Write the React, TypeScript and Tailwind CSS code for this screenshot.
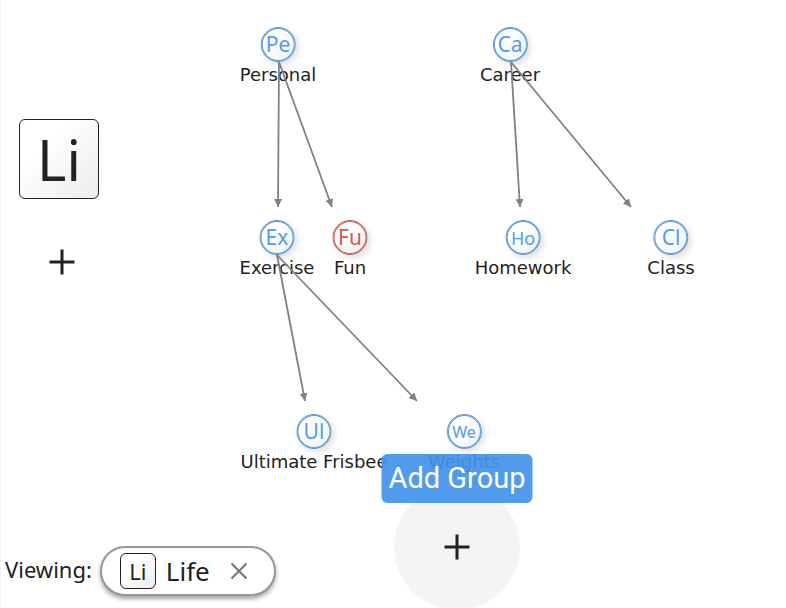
import React from "react";

type GoalNode = {
  name: string;
  initials: string;
  x: number;
  y: number;
  tone: string;
  text: string;
};

const blue = "border-[#5f8fc4] text-[#529bee]";
const red = "border-[#b0655e] text-[#dc5548]";

const nodes: GoalNode[] = [
  { name: "Personal", initials: "Pe", x: 150, y: 27, tone: blue, text: "text-[21px]" },
  { name: "Career", initials: "Ca", x: 382, y: 27, tone: blue, text: "text-[21px]" },
  { name: "Exercise", initials: "Ex", x: 149, y: 220, tone: blue, text: "text-[21px]" },
  { name: "Fun", initials: "Fu", x: 222, y: 220, tone: red, text: "text-[21px]" },
  { name: "Homework", initials: "Ho", x: 395, y: 220, tone: blue, text: "text-lg" },
  { name: "Class", initials: "Cl", x: 543, y: 220, tone: blue, text: "text-[21px]" },
  { name: "Ultimate Frisbee", initials: "Ul", x: 186, y: 414, tone: blue, text: "text-[21px]" },
  { name: "Weights", initials: "We", x: 336, y: 414, tone: blue, text: "text-base" },
];

const edges = [
  [151, 62, 150, 207],
  [151, 62, 204, 207],
  [383, 62, 392, 207],
  [383, 62, 503, 207],
  [149, 255, 177, 401],
  [149, 255, 289, 401],
];

function Plus() {
  return (
    <svg className="size-[26px]" viewBox="0 0 26 26" aria-hidden="true">
      <path d="M13 0.5v25M0.5 13h25" stroke="#222" strokeWidth="3" />
    </svg>
  );
}

function Edges() {
  return (
    <svg className="pointer-events-none absolute inset-0 h-full w-full overflow-visible" aria-hidden="true">
      <defs>
        <marker id="arrow" markerUnits="userSpaceOnUse" markerWidth="9" markerHeight="8" refX="8" refY="4" orient="auto">
          <path d="M0 0L8 4L0 8Z" fill="#808086" />
        </marker>
      </defs>
      {edges.map(([x1, y1, x2, y2]) => (
        <line key={`${x1}-${x2}`} x1={x1} y1={y1} x2={x2} y2={y2} stroke="#808086" strokeWidth="1.8" markerEnd="url(#arrow)" />
      ))}
    </svg>
  );
}

export default function App() {
  return (
    <div className="flex min-h-screen flex-col overflow-hidden border-l border-[#f3f3f3] bg-white [font-family:'Noto_Sans',sans-serif] text-[#222]">
      <main className="flex flex-1">
        <aside className="flex w-[127px] shrink-0 flex-col items-start gap-[50px] pt-[119px] pl-[18px]">
          <button
            type="button"
            className="flex size-20 items-center justify-center rounded-md border border-[#222] bg-linear-to-br from-white from-30% to-[#ececec] text-[56px] leading-none"
          >
            Li
          </button>
          <button type="button" aria-label="Add category" className="ml-[30px]">
            <Plus />
          </button>
        </aside>
        <section aria-label="Groups" className="relative flex-1">
          {nodes.map((node) => (
            <div
              key={node.name}
              className="absolute flex -translate-x-1/2 flex-col items-center"
              style={{ left: node.x, top: node.y }}
            >
              <button
                type="button"
                aria-label={node.name}
                className={`flex size-[35px] items-center justify-center rounded-full border bg-linear-to-br from-white from-30% to-[#f0f0f0] leading-none shadow-[inset_0_0_0_1px_currentColor,3px_3px_6px_rgba(0,0,0,0.12)] ${node.tone} ${node.text}`}
              >
                {node.initials}
              </button>
              <span className="[font-family:'DejaVu_Sans',sans-serif] text-lg leading-[26px] whitespace-nowrap">{node.name}</span>
            </div>
          ))}
          <Edges />
        </section>
      </main>

      <footer className="-mb-0.5 grid grid-cols-[127px_1fr]">
        <div className="col-span-2 col-start-1 row-start-1 flex items-center gap-2 self-end justify-self-start pb-3.5 pl-1">
          <span className="pb-1 text-[22px] leading-7">Viewing:</span>
          <div className="flex h-[50px] w-44 items-center rounded-full border-2 border-[#969696] bg-white pr-[26px] pl-[18px] shadow-[0_3px_4px_rgba(0,0,0,0.35)]">
            <span className="flex size-9 items-center justify-center rounded-md border border-[#222] bg-linear-to-br from-white from-30% to-[#ececec] text-[22px] leading-none">
              Li
            </span>
            <span className="ml-2.5 text-[26px] leading-7">Life</span>
            <button type="button" aria-label="Close Life" className="ml-auto">
              <svg className="size-[18px]" viewBox="0 0 18 18" aria-hidden="true">
                <path d="M1.5 1.5l15 15M16.5 1.5l-15 15" stroke="#747474" strokeWidth="2" />
              </svg>
            </button>
          </div>
        </div>
        <div className="relative col-start-2 row-start-1 justify-self-center">
          <button
            type="button"
            aria-labelledby="add-group"
            className="flex size-[126px] items-center justify-center rounded-full bg-[#f4f4f4]"
          >
            <Plus />
          </button>
          <span
            id="add-group"
            role="tooltip"
            className="absolute bottom-[107px] left-1/2 flex h-[49px] w-[151px] -translate-x-1/2 items-center justify-center rounded-md bg-[#4292ec]/92 [font-family:Roboto,sans-serif] text-[29px] leading-none whitespace-nowrap text-white"
          >
            Add Group
          </span>
        </div>
      </footer>
    </div>
  );
}
